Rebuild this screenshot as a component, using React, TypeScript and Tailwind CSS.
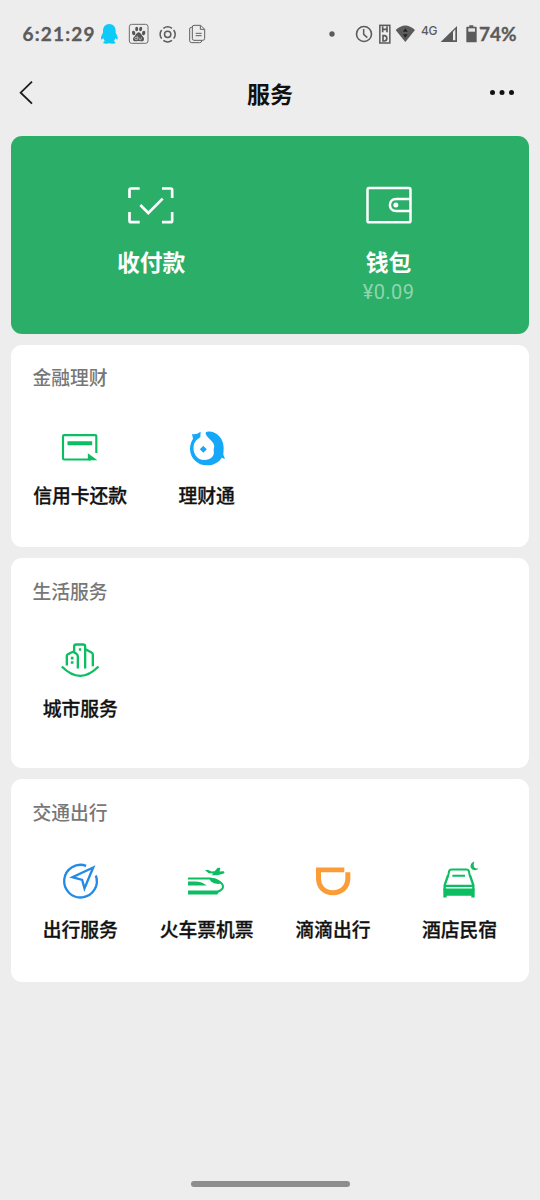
import type { ReactNode } from 'react';

const GREEN = '#0dbd61';

function Glyph({ box, w = 42, h = 42, className = '', children }: { box: string; w?: number; h?: number; className?: string; children: ReactNode }) {
  return (
    <svg viewBox={box} width={w} height={h} fill="none" className={`block shrink-0 overflow-visible ${className}`}>
      {children}
    </svg>
  );
}

function StatusBar() {
  return (
    <div className="flex h-[68px] items-center justify-between pr-[23px] pl-[22px] font-[Lato,sans-serif] text-[#5b5b5b]">
      <div className="flex h-6 items-center">
        <span className="w-[76px] pl-[0.5px] text-[19px] leading-6 font-bold tracking-[1.2px] whitespace-nowrap [-webkit-text-stroke:0.3px_#5b5b5b]">6:21:29</span>
        <Glyph box="294 36 81 72" w={27} h={24}>
          <path d="M328 42c-12 0-19 9-19 21v5c-3 6-7 12-6 19 1 3 4 1 7-3 1 4 2 7 5 9-4 2-6 4-5 7 4 2 13 2 18 0 5 2 14 2 18 0 1-3-1-5-5-7 3-2 4-5 5-9 3 4 6 6 7 3 1-7-3-13-6-19v-5c0-12-7-21-19-21z" fill="#0dcaf8" />
        </Glyph>
        <Glyph box="375 36 84 72" w={28} h={24}>
          <rect x="388" y="43" width="56" height="57" rx="7" stroke="#646464" strokeWidth="2.8" />
          <g fill="#555">
            <ellipse cx="401" cy="69" rx="5" ry="7" transform="rotate(-12 401 69)" />
            <ellipse cx="410" cy="57" rx="4.5" ry="7" />
            <ellipse cx="422" cy="57" rx="4.5" ry="7" transform="rotate(10 422 57)" />
            <ellipse cx="431" cy="69" rx="5" ry="7" transform="rotate(12 431 69)" />
            <path d="M416 67c6 0 8 8 13 13 5 4 4 14-3 14-4 0-6-1-10-1s-6 1-10 1c-8 0-9-10-3-14 5-5 7-13 13-13z" />
          </g>
          <path d="M412 77v12h-4c-5 0-5-7 0-7h4M417 82v5c0 3 7 3 7 0v-5" stroke="#ddd" strokeWidth="2" />
        </Glyph>
        <Glyph box="459 36 90 72" w={30} h={24}>
          <g stroke="#5b5b5b" strokeWidth="4.5">
            <circle cx="503" cy="73" r="9.5" />
            <path d="M490 55a22 22 0 0 1 26 0M490 91a22 22 0 0 0 26 0M485 60a22 22 0 0 0 0 26M521 60a22 22 0 0 1 0 26" />
          </g>
        </Glyph>
        <Glyph box="549 36 84 72" w={28} h={24}>
          <g stroke="#606060" strokeWidth="3" strokeLinejoin="round">
            <path d="M582 46h20l12 12v27q0 6-6 6h-26q-5 0-5-6V51q0-5 5-5zM601 47v11h12M577 52h-3q-5 0-5 5v35q0 6 6 6h24q5 0 7-6" />
            <path d="M587 70h18M587 77h18" />
          </g>
        </Glyph>
      </div>
      <div className="flex h-6 items-center">
        <Glyph box="54 36 75 72" w={25} h={24}>
          <circle cx="66" cy="72" r="8" fill="#5b5b5b" />
        </Glyph>
        <Glyph box="129 36 69 72" w={23} h={24}>
          <circle cx="162" cy="72" r="22.5" stroke="#5b5b5b" strokeWidth="4.8" />
          <path d="M161 57v16l11 10" stroke="#5b5b5b" strokeWidth="4.5" />
        </Glyph>
        <Glyph box="198 36 54 72" w={18} h={24}>
          <rect x="209.500" y="46" width="30" height="53" stroke="#5b5b5b" strokeWidth="4.5" />
          <path d="M218 49v18M231 49v18M218 58h13M219 77v16h4c10 0 10-16 0-16z" stroke="#5b5b5b" strokeWidth="5" />
        </Glyph>
        <Glyph box="252 36 78 72" w={26} h={24}>
          <path d="M257 60q29-27 58 0l-29 36z" fill="#5b5b5b" />
          <path d="M286 55l7 10h-14zM286 83l-7-10h14z" fill="#222" />
        </Glyph>
        <span className="mt-[-6px] w-[19px] pl-px font-[Inter,sans-serif] text-[12px] leading-4 font-medium tracking-[-0.300px]">4G</span>
        <Glyph box="387 36 78 72" w={26} h={24}>
          <path d="M392 96l49-48v48z" fill="#5b5b5b" />
          <path d="M429 65l7-7v33h-7z" fill="#eee" />
        </Glyph>
        <Glyph box="465 36 42 72" w={14} h={24}>
          <path d="M478 46h12v4h8q2 0 2 2v43q0 2-2 2h-27q-2 0-2-2V52q0-2 2-2h7z" fill="#5b5b5b" />
          <path d="M475 55h20v10h-20z" fill="#e7e7e7" />
        </Glyph>
        <span className="w-[38px] text-[19px] leading-6 font-bold whitespace-nowrap [-webkit-text-stroke:0.3px_#5b5b5b]">74%</span>
      </div>
    </div>
  );
}

function Header() {
  return (
    <header className="grid h-[50px] grid-cols-3 items-center px-[15px]">
      <Glyph box="45 209 66 78" w={22} h={26}>
        <path d="M96 214L62 247l34 33" stroke="#1c1c1c" strokeWidth="5.500" />
      </Glyph>
      <h1 className="text-center text-[23px] leading-8 font-bold text-[#111]">服务</h1>
      <Glyph box="534 231 84 36" w={28} h={12} className="mr-[9px] justify-self-end">
        <g fill="#111">
          <circle cx="547.500" cy="247.500" r="7.500" />
          <circle cx="576" cy="247.500" r="7.500" />
          <circle cx="604.500" cy="247.500" r="7.500" />
        </g>
      </Glyph>
    </header>
  );
}

const ScanIcon = () => (
  <Glyph box="78 42 150 126" w={50} h={42}>
    <g stroke="#fff" strokeWidth="8">
      <path d="M88.500 84V60q0-4.500 4.500-4.500h26M186 55.500h26q4.500 0 4.500 4.500v24M216.500 126v26q0 4.500-4.500 4.500h-26M119 156.500H93q-4.500 0-4.500-4.500v-26" />
      <path d="M121 105l24 24 43-43" />
    </g>
  </Glyph>
);

const WalletIcon = () => (
  <Glyph box="100.500 42 150 126" w={50} h={42}>
    <g stroke="#fff" strokeWidth="7.500">
      <rect x="111" y="54" width="129" height="103" rx="5" />
      <path d="M240 87h-43c-25 0-25 36 0 36h43" />
    </g>
    <circle cx="196" cy="105" r="7.500" fill="#fff" />
  </Glyph>
);

const CardIcon = () => (
  <Glyph box="117.500 234 126 126">
    <path d="M229.500 309v-50q0-3.500-3.500-3.500h-93q-3.500 0-3.500 3.500v66q0 3.500 3.500 3.500h80" stroke={GREEN} strokeWidth="6.5" />
    <path d="M143 274h74v12h-74zM204 310l29 21h-29z" fill={GREEN} />
  </Glyph>
);

const FishIcon = () => (
  <Glyph box="498 234 126 126">
    <path d="M516 252q12 3 26-7l-1 16-12 10c-14 14-10 45 8 55 16 9 39 3 44-13 2-8-2-12 2-24-2-16-18-22-24-33-4-7-2-11 3-11 26-3 49 19 49 49l-1 20 5 13-10-4c-8 14-25 23-44 23-29 0-51-22-51-50 0-13 5-23 9-30z" fill="#16a8f8" />
    <path d="M550 291l7 7-7 7-7-7z" fill="#16a8f8" stroke="#16a8f8" strokeWidth="5" />
  </Glyph>
);

const CityIcon = () => (
  <Glyph box="118.500 214.500 126 126">
    <g stroke={GREEN} strokeWidth="7">
      <path d="M127 291q55 56 110 0" />
      <path d="M142 288v-29q0-3 2-4l13-7q3-2 6 0l8 5q4 3 4 7v37M164 249v-18q0-6 6-6h21q6 0 6 6v66M198 239l18 10q4 2 4 7v34" />
    </g>
    <path d="M178 236h7v8h-7zM154 262h8v8h-8zM154 275h8v8h-8z" fill={GREEN} />
  </Glyph>
);

const CompassIcon = () => (
  <Glyph box="118.500 217.500 126 126">
    <path d="M200 229a49 49 0 1 0 29 29" stroke="#218be6" strokeWidth="7" />
    <path d="M221 234l-62 29 29 8 7 26z" stroke="#218be6" strokeWidth="7" />
  </Glyph>
);

const TrainIcon = () => (
  <Glyph box="498 217.500 126 126">
    <path d="M504 267h66c26 2 39 16 39 25 0 8-6 11-16 15" stroke={GREEN} strokeWidth="6" />
    <path d="M504 276h20c16 0 28 5 36 12h-56zM568 268h16c8 3 14 8 17 15-14 2-29-3-33-15zM504 303h94l-6 12h-88z" fill={GREEN} />
    <path d="M555 242l8-1 12 5 9-1 9-10h8l-2 11 9-1c7 0 7 6 1 8l-17 4h-17l5-5-14-1z" fill={GREEN} />
  </Glyph>
);

const CupIcon = () => (
  <Glyph box="96 67.500 126 126">
    <path d="M108 84h85v14h-70v18c0 20 13 36 35 36 24 0 38-16 38-36V98h15v18c0 30-22 51-52 51-31 0-51-22-51-51z" fill="#fb9d37" />
  </Glyph>
);

const BedIcon = () => (
  <Glyph box="474 67.500 126 126">
    <path d="M504 111l3-14q1-7 8-7h44q7 0 8 7l3 14M517 109h38" stroke={GREEN} strokeWidth="6" />
    <path d="M504 108l-10 29v16M570 108l10 29v16M495 139h84" stroke={GREEN} strokeWidth="7" />
    <path d="M490 147h94v27h-10v-5h-74v5h-10zM583 66c-12 4-14 15-8 22s17 4 20-1c-12 2-17-7-12-21z" fill={GREEN} />
  </Glyph>
);

type Item = { label: string; icon: ReactNode };

function Section({ title, items, height }: { title: string; items: Item[]; height: string }) {
  return (
    <section className={`rounded-[11px] bg-white px-[6.5px] ${height}`}>
      <h2 className="pt-[18.5px] pl-[15.5px] text-[18.8px] leading-7 font-medium text-[#777]">{title}</h2>
      <div className="mt-[36.5px] grid grid-cols-4">
        {items.map((item) => (
          <div key={item.label} className="flex flex-col items-center">
            {item.icon}
            <span className="mt-[11px] text-[18.8px] leading-7 font-medium whitespace-nowrap text-[#111] [-webkit-text-stroke:0.3px_#111]">{item.label}</span>
          </div>
        ))}
      </div>
    </section>
  );
}

export default function App() {
  return (
    <div className="flex h-[1200px] w-[540px] flex-col overflow-hidden bg-[#ededed] font-['Noto_Sans_CJK_SC',sans-serif]">
      <StatusBar />
      <Header />
      <main className="mt-[17.5px] flex grow flex-col gap-[11px] pr-[10.8px] pl-[10.5px]">
        <section className="grid h-[198px] grid-cols-2 rounded-[11px] bg-[#2bae68] px-[22px] pt-12 text-white">
          <div className="flex flex-col items-center">
            <ScanIcon />
            <span className="mt-[20px] text-[22.8px] leading-8 font-bold">收付款</span>
          </div>
          <div className="flex flex-col items-center">
            <WalletIcon />
            <span className="mt-[20px] text-[22.8px] leading-8 font-bold">钱包</span>
            <span className="font-[Roboto,sans-serif] text-[20px] leading-7 font-normal tracking-[0.400px] text-[#8fd5ae]">¥0.09</span>
          </div>
        </section>
        <Section
          title="金融理财"
          height="h-[202.5px]"
          items={[
            { label: '信用卡还款', icon: <CardIcon /> },
            { label: '理财通', icon: <FishIcon /> },
          ]}
        />
        <Section title="生活服务" height="h-[210px]" items={[{ label: '城市服务', icon: <CityIcon /> }]} />
        <Section
          title="交通出行"
          height="h-[202.5px]"
          items={[
            { label: '出行服务', icon: <CompassIcon /> },
            { label: '火车票机票', icon: <TrainIcon /> },
            { label: '滴滴出行', icon: <CupIcon /> },
            { label: '酒店民宿', icon: <BedIcon /> },
          ]}
        />
      </main>
      <div className="mb-[13px] h-[6px] w-[159px] self-center rounded-full bg-[#8d8d8d]" />
    </div>
  );
}
